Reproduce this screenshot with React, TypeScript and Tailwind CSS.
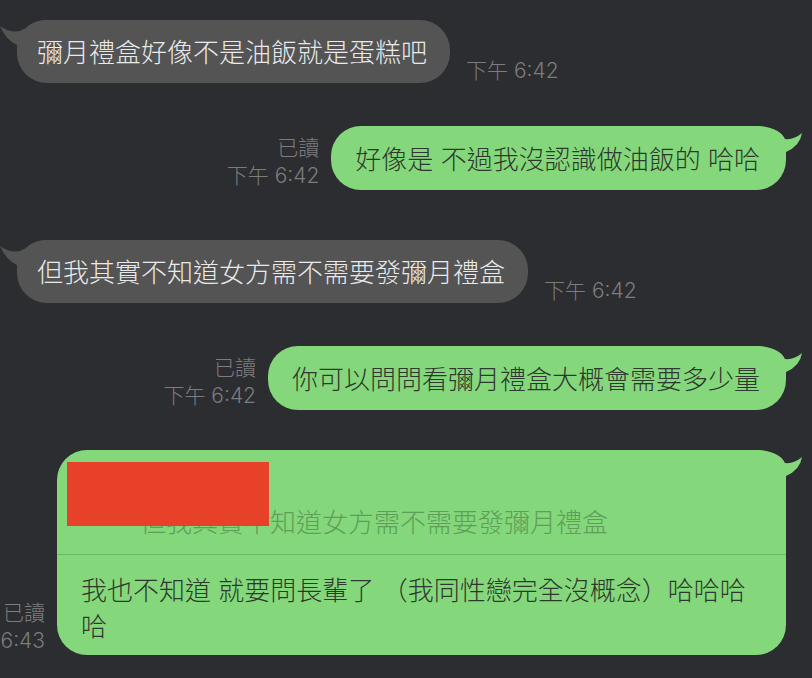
import React from "react";

const FONT = {
  fontFamily: '"Inter", "Noto Sans CJK TC", "Noto Sans CJK SC", sans-serif',
};

function LeftTail() {
  return (
    <svg
      className="absolute left-[-17px] top-0 w-[48px] h-[30px]"
      viewBox="0 0 48 30"
    >
      <path
        d="M48,0 C36,0 30,4 26,8 Q14,16 0,6 Q6,20 17,25 L17,30 L48,30 Z"
        fill="#545454"
      />
    </svg>
  );
}

function RightTail() {
  return (
    <svg
      className="absolute right-[-16px] top-0 w-[46px] h-[30px]"
      viewBox="0 0 46 30"
    >
      <path
        d="M0,0 C15,0 26,6 29,13 Q38,14 46,7 Q44,20 30,26 L30,30 L0,30 Z"
        fill="#84d87b"
      />
    </svg>
  );
}

function Received({ text, time, mt }: { text: string; time: string; mt: string }) {
  return (
    <div className={`flex items-end pl-[17px] ${mt}`}>
      <div className="relative rounded-[30px] bg-[#545454] pl-5 pr-[23px] pt-[15px] pb-[12px] text-[26px] leading-[36px] text-[#e9e9e9] whitespace-nowrap">
        <LeftTail />
        <span className="relative">{text}</span>
      </div>
      <div className="ml-[16px] mb-[-2px] text-[21px] leading-[28px] font-light text-[#7c7c7e] whitespace-nowrap">
        {time}
      </div>
    </div>
  );
}

function ReadInfo({ time }: { time: string }) {
  return (
    <div className="mr-[12px] shrink-0 text-right text-[21px] leading-[28px] font-light text-[#7c7c7e] whitespace-nowrap">
      <div>已讀</div>
      <div>{time}</div>
    </div>
  );
}

function Sent({ text, time, mt }: { text: string; time: string; mt: string }) {
  return (
    <div className={`flex items-end justify-end pr-[26px] ${mt}`}>
      <ReadInfo time={time} />
      <div className="relative rounded-[30px] bg-[#84d87b] pl-6 pr-[26px] pt-[16px] pb-[12px] text-[26px] leading-[36px] text-[#2f382e] whitespace-nowrap">
        <RightTail />
        <span className="relative">{text}</span>
      </div>
    </div>
  );
}

export default function App() {
  return (
    <div
      className="w-[812px] h-[678px] overflow-hidden bg-[#2c2d30] pt-[20px] font-light"
      style={FONT}
    >
      <Received text="彌月禮盒好像不是油飯就是蛋糕吧" time="下午 6:42" mt="" />
      <Sent text="好像是 不過我沒認識做油飯的 哈哈" time="下午 6:42" mt="mt-[43px]" />
      <Received
        text="但我其實不知道女方需不需要發彌月禮盒"
        time="下午 6:42"
        mt="mt-[50px]"
      />
      <Sent
        text="你可以問問看彌月禮盒大概會需要多少量"
        time="下午 6:42"
        mt="mt-[43px]"
      />
      <div className="flex items-end justify-end pr-[26px] mt-[40px]">
        <ReadInfo time="下午 6:43" />
        <div className="relative w-[729px] shrink-0 rounded-[30px] bg-[#84d87b] text-[26px] leading-[36px]">
          <RightTail />
          <div className="relative h-[104px] pl-[83px] pt-[55px] text-[#5f9e59] whitespace-nowrap">
            但我其實不知道女方需不需要發彌月禮盒
            <div className="absolute left-[10px] top-[12px] w-[202px] h-[64px] bg-[#e8412a]" />
          </div>
          <div className="border-t border-[#6cba64]" />
          <div className="relative pl-6 pt-[18px] pb-[10px] text-[#2f382e]">
            <div className="whitespace-nowrap">我也不知道 就要問長輩了 （我同性戀完全沒概念）哈哈哈</div>
            <div>哈</div>
          </div>
        </div>
      </div>
    </div>
  );
}
